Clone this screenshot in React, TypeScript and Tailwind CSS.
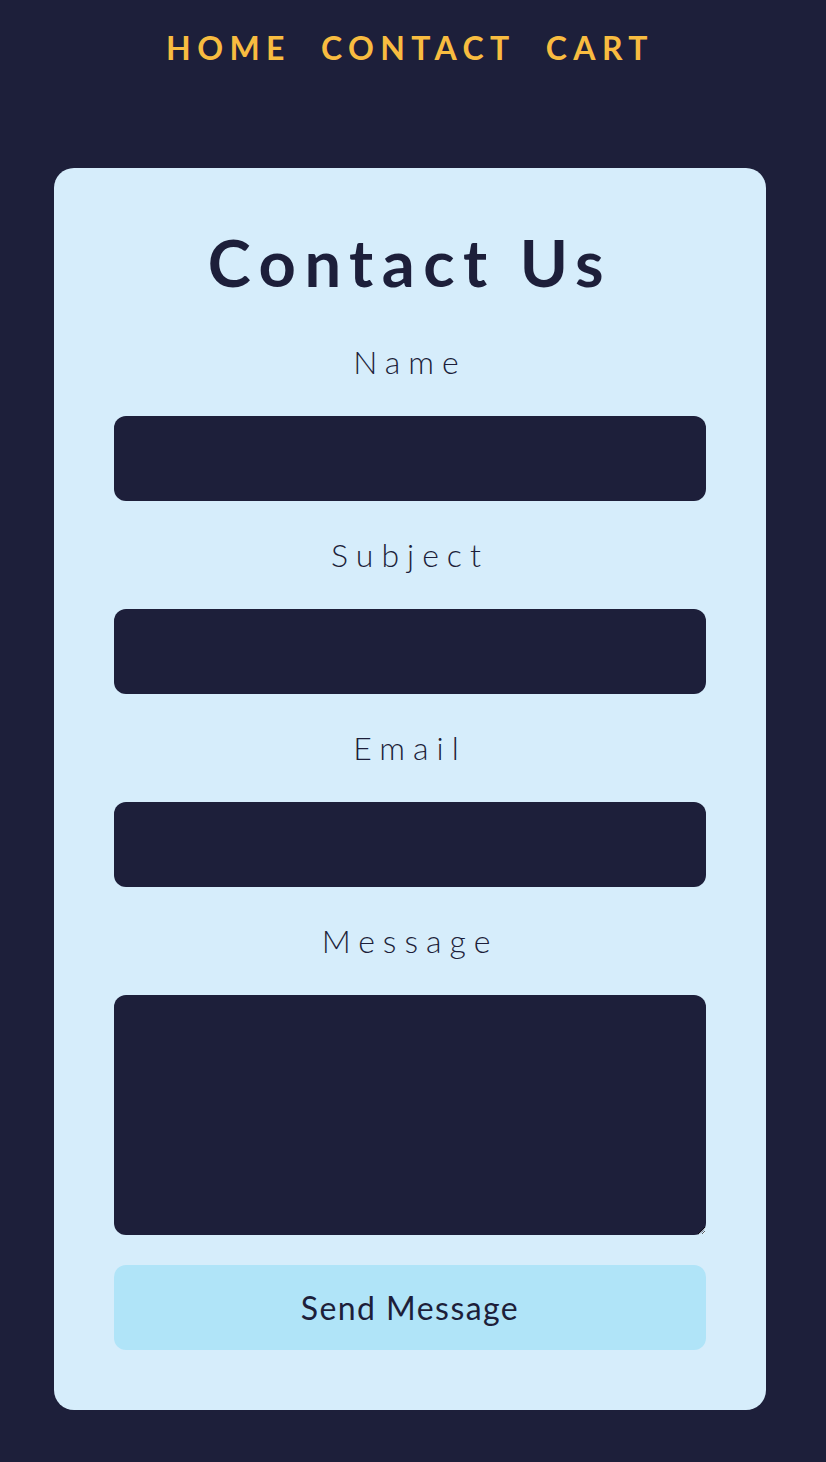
import React from "react";

export default function App() {
  const fields = ["Name", "Subject", "Email"];
  return (
    <div className="min-h-[1462px] w-full bg-[#1d1f3a]" style={{ fontFamily: "Lato, 'Open Sans', sans-serif" }}>
      <nav className="flex h-[96px] items-center justify-center gap-[30px] pr-[6px]">
        {["HOME", "CONTACT", "CART"].map((t) => (
          <a key={t} className="text-[32px] font-bold leading-none tracking-[0.2em] text-[#f8bc40]">
            {t}
          </a>
        ))}
      </nav>
      <div className="mx-[54px] mt-[72px] w-[712px] rounded-[20px] bg-[#d6edfb] px-[60px] pt-[56px] pb-[60px]">
        <h1 className="mb-[37px] text-center text-[65px] font-bold leading-[77px] tracking-[0.13em] text-[#1d1f3a]">
          Contact Us
        </h1>
        <form className="flex flex-col gap-[30px]" onSubmit={(e) => e.preventDefault()}>
          {fields.map((f) => (
            <React.Fragment key={f}>
              <label className="text-center text-[32px] font-light leading-[48px] tracking-[0.25em] text-[#1d1f3a]">{f}</label>
              <input className="h-[85px] w-full rounded-[12px] bg-[#1d1f3a] outline-none" />
            </React.Fragment>
          ))}
          <label className="text-center text-[32px] font-light leading-[48px] tracking-[0.25em] text-[#1d1f3a]">Message</label>
          <textarea className="block h-[240px] w-full rounded-[12px] bg-[#1d1f3a] outline-none" />
          <button className="h-[85px] w-full rounded-[12px] bg-[#b0e4f8] text-[32px] tracking-[0.045em] text-[#1d1f3a]">Send Message</button>
        </form>
      </div>
    </div>
  );
}
